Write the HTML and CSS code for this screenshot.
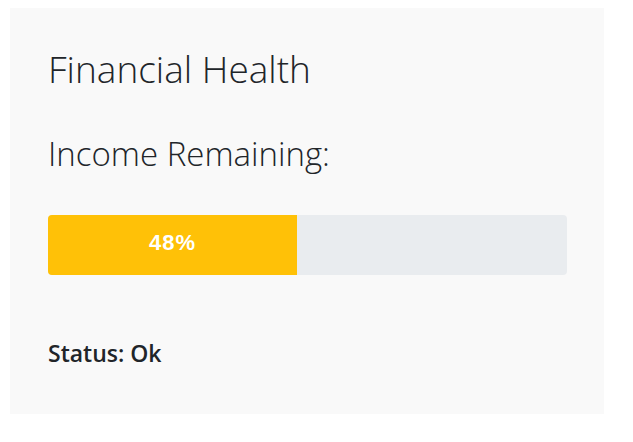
FILE: index.html
```html
<!DOCTYPE html>
<html lang="en">
<head>
    <meta charset="UTF-8">
    <meta name="viewport" content="width=device-width, initial-scale=1.0">
    <title>Financial Health</title>
    <link rel="stylesheet" href="styles.css">
</head>
<body>
    <div class="health-card">
        <h1 class="card-title">Financial Health</h1>
        <h2 class="card-subtitle">Income Remaining:</h2>
        <div class="progress">
            <div class="progress-bar" style="width: 48%">48%</div>
        </div>
        <p class="status">Status: Ok</p>
    </div>
</body>
</html>
```

FILE: styles.css
```css
body {
    margin: 0;
    padding: 8px 29px 0 10px;
    background-color: #fff;
    font-family: "Open Sans", "Noto Sans", sans-serif;
    color: #212529;
}

.health-card {
    background-color: #f9f9f9;
    padding: 39px 37px 44px 38px;
}

.card-title {
    font-size: 37px;
    font-weight: 300;
    margin: 0 0 43px;
    line-height: 1.2;
}

.card-subtitle {
    font-size: 33px;
    font-weight: 300;
    margin: 0 0 41px;
    line-height: 1.2;
}

.progress {
    display: flex;
    height: 60px;
    background-color: #e9ecef;
    border-radius: 4px;
    overflow: hidden;
}

.progress-bar {
    display: flex;
    align-items: center;
    justify-content: center;
    background-color: #ffc107;
    color: #fff;
    font-family: "Liberation Sans", Arial, sans-serif;
    font-size: 22px;
    font-weight: 700;
    letter-spacing: 1px;
    padding-bottom: 4px;
    box-sizing: border-box;
}

.status {
    margin: 61px 0 0;
    font-size: 23px;
    font-weight: 600;
    line-height: 1.5;
}
```
